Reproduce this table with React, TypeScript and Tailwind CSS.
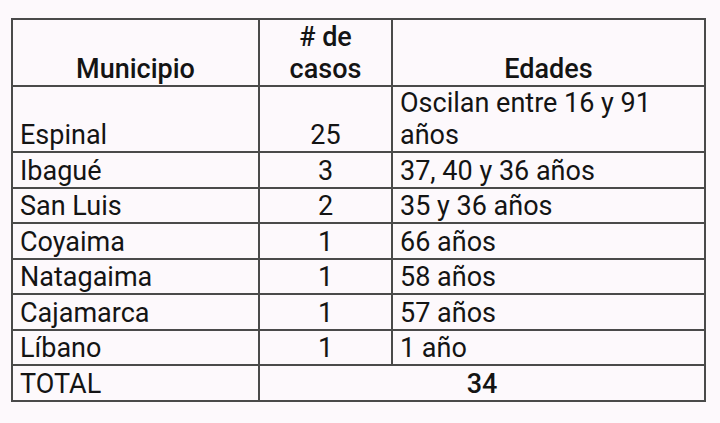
const rows = [
  { municipio: "Espinal", casos: "25", edades: "Oscilan entre 16 y 91 años", tall: true },
  { municipio: "Ibagué", casos: "3", edades: "37, 40 y 36 años" },
  { municipio: "San Luis", casos: "2", edades: "35 y 36 años" },
  { municipio: "Coyaima", casos: "1", edades: "66 años" },
  { municipio: "Natagaima", casos: "1", edades: "58 años" },
  { municipio: "Cajamarca", casos: "1", edades: "57 años" },
  { municipio: "Líbano", casos: "1", edades: "1 año" },
];

export default function App() {
  return (
    <div
      className="w-[720px] h-[423px] bg-[#fdf9fc] pt-[18px] pl-[11px] text-[#141414] text-[27px] leading-[32px]"
      style={{ fontFamily: "Roboto, 'Liberation Sans', sans-serif" }}
    >
      <table className="table-fixed border-collapse w-[693px]">
        <colgroup>
          <col className="w-[247px]" />
          <col className="w-[133px]" />
          <col className="w-[313px]" />
        </colgroup>
        <thead>
          <tr className="h-[67px]">
            <th className="border-2 border-[#4a4a4a] align-bottom text-center font-medium p-0">Municipio</th>
            <th className="border-2 border-[#4a4a4a] align-bottom text-center font-medium p-0">
              # de
              <br />
              casos
            </th>
            <th className="border-2 border-[#4a4a4a] align-bottom text-center font-medium p-0">Edades</th>
          </tr>
        </thead>
        <tbody>
          {rows.map((r) => (
            <tr key={r.municipio} className={r.tall ? "h-[66px]" : "h-[35.5px]"}>
              <td className="border-2 border-[#4a4a4a] align-bottom px-[7px] py-0">{r.municipio}</td>
              <td className="border-2 border-[#4a4a4a] align-bottom text-center p-0">{r.casos}</td>
              <td className="border-2 border-[#4a4a4a] align-bottom px-[7px] py-0">{r.edades}</td>
            </tr>
          ))}
          <tr className="h-[35.5px]">
            <td className="border-2 border-[#4a4a4a] align-bottom px-[7px] py-0">TOTAL</td>
            <td colSpan={2} className="border-2 border-[#4a4a4a] align-bottom text-center font-medium p-0">
              34
            </td>
          </tr>
        </tbody>
      </table>
    </div>
  );
}
